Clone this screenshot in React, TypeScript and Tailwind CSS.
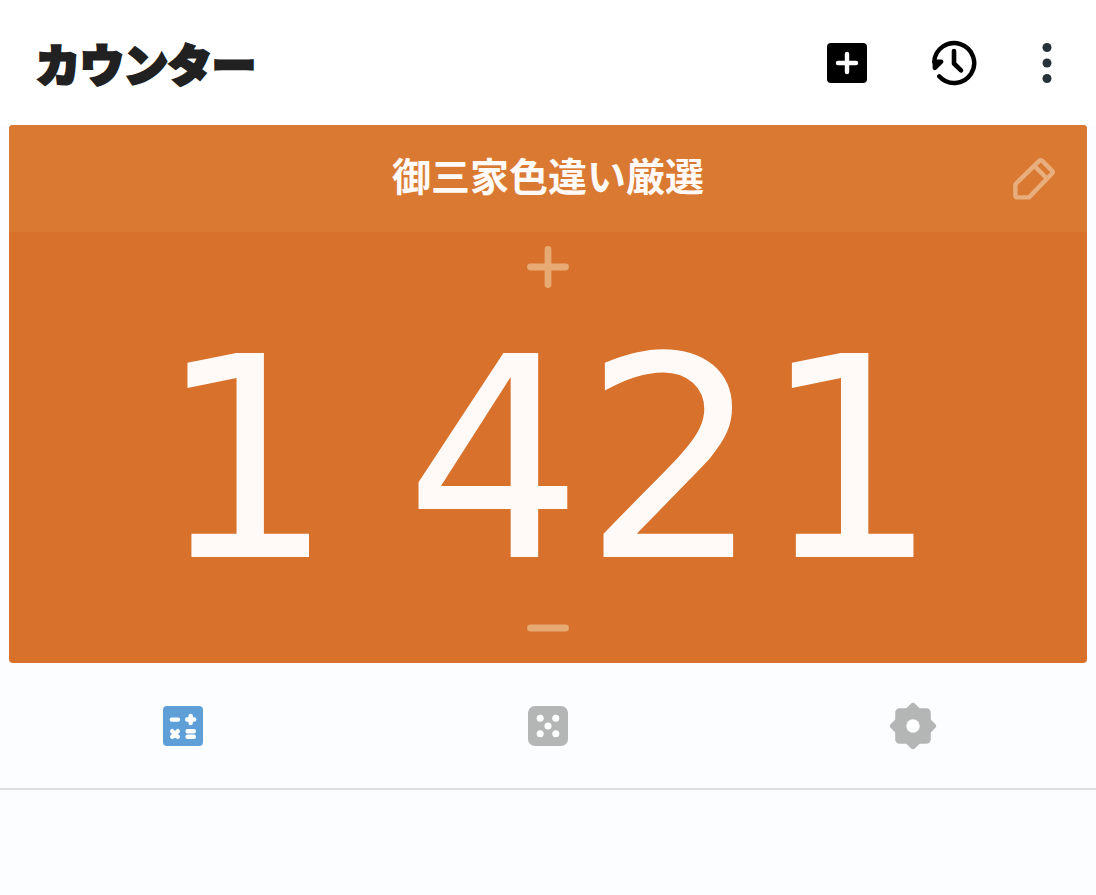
import { useState } from "react";

function AddIcon() {
    return (
        <svg width="40" height="40" viewBox="0 0 40 40" fill="none" aria-hidden="true">
            <rect width="40" height="40" rx="4" fill="#000" />
            <path d="M20 11V29M11 20H29" stroke="#fff" strokeWidth="4.4" strokeLinecap="round" />
        </svg>
    );
}

function HistoryIcon() {
    return (
        <svg width="48" height="48" viewBox="0 0 48 48" fill="none" stroke="#000" aria-hidden="true">
            <path d="M9.2 37.3A20 20 0 1 0 4.2 23" strokeWidth="4.4" strokeLinecap="round" />
            <path d="M4.8 29L4.8 22.8L11.2 22.6Z" fill="#000" strokeWidth="4.4" strokeLinejoin="round" />
            <path d="M24 12V24.5L31 31.3" strokeWidth="4.6" strokeLinecap="round" strokeLinejoin="round" />
        </svg>
    );
}

function MoreIcon() {
    return (
        <svg width="20" height="42" viewBox="0 0 20 42" fill="#263238" aria-hidden="true">
            <circle cx="10" cy="5.5" r="4.5" />
            <circle cx="10" cy="21" r="4.5" />
            <circle cx="10" cy="36.5" r="4.5" />
        </svg>
    );
}

function PencilIcon() {
    return (
        <svg width="42" height="42" viewBox="0 0 42 42" fill="none" stroke="#e9ae7d" strokeWidth="4.4" strokeLinejoin="round" aria-hidden="true">
            <path d="M2.4 26.2L26.2 2.9Q27.7 1.6 29.2 2.9L39 12.6Q40.3 14 39 15.5L16 39.4H4Q2.4 39.4 2.4 37.8Z" />
            <path d="M21.8 8.4L33.6 20.2" />
        </svg>
    );
}

function PlusIcon() {
    return (
        <svg width="42" height="42" viewBox="0 0 42 42" stroke="#e7aa75" strokeWidth="6.8" strokeLinecap="round" aria-hidden="true">
            <path d="M21 3.5V38.5M3.5 21H38.5" />
        </svg>
    );
}

function MinusIcon() {
    return (
        <svg width="42" height="42" viewBox="0 0 42 42" stroke="#e7aa75" strokeWidth="6.8" strokeLinecap="round" aria-hidden="true">
            <path d="M3.5 21H38.5" />
        </svg>
    );
}

function CalculatorIcon() {
    return (
        <svg width="40" height="40" viewBox="0 0 40 40" aria-hidden="true">
            <rect width="40" height="40" rx="4" fill="currentColor" />
            <path
                d="M8.8 13.6H15M27.7 10V17M24.2 13.5H31.2M9.2 25.2L14.8 30.8M14.8 25.2L9.2 30.8M24.6 25.2H30.8M24.6 30.8H30.8"
                stroke="#fff" strokeWidth="4.4" strokeLinecap="round"
            />
        </svg>
    );
}

function DiceIcon() {
    return (
        <svg width="40" height="40" viewBox="0 0 40 40" aria-hidden="true">
            <rect width="40" height="40" rx="7" fill="currentColor" />
            <g fill="#fff">
                <circle cx="12.2" cy="12.2" r="3.5" />
                <circle cx="27.8" cy="12.2" r="3.5" />
                <circle cx="20" cy="20" r="3.5" />
                <circle cx="12.2" cy="27.8" r="3.5" />
                <circle cx="27.8" cy="27.8" r="3.5" />
            </g>
        </svg>
    );
}

function GearIcon() {
    return (
        <svg width="48" height="48" viewBox="0 0 48 48" aria-hidden="true">
            <g fill="currentColor">
                <rect x="6.2" y="6.2" width="35.6" height="35.6" rx="4.5" />
                <rect x="6.8" y="6.8" width="34.4" height="34.4" rx="3" transform="rotate(45 24 24)" />
            </g>
            <circle cx="24" cy="24" r="6.7" fill="#fff" />
        </svg>
    );
}

const tabs = [
    { label: "計算", Icon: CalculatorIcon },
    { label: "ランダム", Icon: DiceIcon },
    { label: "設定", Icon: GearIcon },
];

export default function App() {
    const [count, setCount] = useState(1421);
    const [active, setActive] = useState(0);

    return (
        <div className="min-h-screen bg-[#fcfdff] font-['Noto_Sans_CJK_JP',sans-serif]">

            {/* Top bar */}
            <header className="flex h-[125px] items-center justify-between bg-white pl-9 pr-[39px]">
                <h1 className="text-[44px] leading-none font-black text-[#212121] [-webkit-text-stroke:3px_#212121]">カウンター</h1>
                <div className="flex items-center gap-[59px]">
                    <button type="button" aria-label="追加" className="flex size-12 items-center justify-center">
                        <AddIcon />
                    </button>
                    <button type="button" aria-label="履歴" className="flex size-12 items-center justify-center">
                        <HistoryIcon />
                    </button>
                    <button type="button" aria-label="メニュー" className="flex h-12 w-5 items-center justify-center">
                        <MoreIcon />
                    </button>
                </div>
            </header>

            {/* Counter card */}
            <main className="mx-[9px] overflow-hidden rounded bg-[#d8712b]">
                <div className="grid h-[107px] grid-cols-[1fr_auto_1fr] items-center bg-[#d97932] px-8">
                    <h2 className="col-start-2 pb-2 text-[39px] leading-none font-bold text-[#fffaf7]">御三家色違い厳選</h2>
                    <button type="button" aria-label="編集" className="justify-self-end">
                        <PencilIcon />
                    </button>
                </div>
                <div className="flex h-[431px] flex-col items-center justify-between py-[14px]">
                    <button type="button" aria-label="増やす" onClick={() => setCount(count + 1)}>
                        <PlusIcon />
                    </button>
                    <output className="pt-6 font-['DejaVu_Sans',sans-serif] text-[280px] leading-none whitespace-nowrap text-[#fffaf7]">
                        {String(count).replace(/\B(?=(\d{3})+$)/g, "\u2005")}
                    </output>
                    <button type="button" aria-label="減らす" onClick={() => setCount(count - 1)}>
                        <MinusIcon />
                    </button>
                </div>
            </main>

            {/* Tabs */}
            <nav className="grid h-[127px] grid-cols-3 border-b-2 border-[#dcdee0]">
                {tabs.map(({ label, Icon }, i) => (
                    <button
                        key={label}
                        type="button"
                        aria-label={label}
                        onClick={() => setActive(i)}
                        className={`flex items-center justify-center ${i === active ? "text-[#5e9fd7]" : "text-[#b4b6b6]"}`}
                    >
                        <Icon />
                    </button>
                ))}
            </nav>
        </div>
    );
}
